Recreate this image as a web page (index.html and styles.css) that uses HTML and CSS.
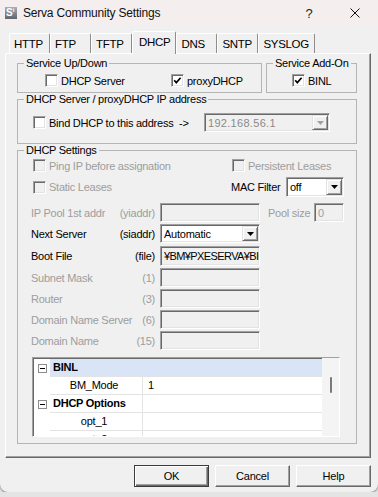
FILE: index.html
```html
<!DOCTYPE html>
<html lang="en">
<head>
    <meta charset="UTF-8">
    <title>Serva Community Settings</title>
    <link rel="stylesheet" href="styles.css">
</head>
<body>

<div class="window">
    <div class="titlebar">
        <span class="app-icon">S<small>i</small></span>
        <span class="title">Serva Community Settings</span>
        <span class="tb-btn">?</span>
        <span class="tb-btn">
            <svg width="10" height="10" viewBox="0 0 10 10"><path d="M0.5 0.5 L9.5 9.5 M9.5 0.5 L0.5 9.5" stroke="#111" stroke-width="1" fill="none"/></svg>
        </span>
    </div>

    <div class="tabs">
        <span class="tab">HTTP</span>
        <span class="tab">FTP</span>
        <span class="tab">TFTP</span>
        <span class="tab active">DHCP</span>
        <span class="tab">DNS</span>
        <span class="tab">SNTP</span>
        <span class="tab">SYSLOG</span>
    </div>

    <div class="panel">
        <div class="group-row">
            <fieldset class="group up-down">
                <legend>Service Up/Down</legend>
                <div class="group-body">
                    <label class="check"><span class="box"></span>DHCP Server</label>
                    <label class="check"><span class="box"><svg width="11" height="11" viewBox="0 0 11 11"><path d="M2.2 5.2 L4.3 7.6 L8.6 2.8" stroke="#000" stroke-width="1.7" fill="none"/></svg></span>proxyDHCP</label>
                </div>
            </fieldset>
            <fieldset class="group add-on">
                <legend>Service Add-On</legend>
                <div class="group-body">
                    <label class="check"><span class="box"><svg width="11" height="11" viewBox="0 0 11 11"><path d="M2.2 5.2 L4.3 7.6 L8.6 2.8" stroke="#000" stroke-width="1.7" fill="none"/></svg></span>BINL</label>
                </div>
            </fieldset>
        </div>

        <fieldset class="group bind">
            <legend>DHCP Server / proxyDHCP IP address</legend>
            <div class="group-body">
                <label class="check"><span class="box"></span>Bind DHCP to this address&nbsp;&nbsp;-&gt;</label>
                <div class="combo disabled bind-combo">
                    <span class="combo-text">192.168.56.1</span>
                    <span class="combo-btn"><svg width="7" height="4" viewBox="0 0 7 4"><path d="M0 0 H7 L3.5 4 Z" fill="#a0a0a0"/></svg></span>
                </div>
            </div>
        </fieldset>

        <fieldset class="group settings">
            <legend>DHCP Settings</legend>
            <div class="group-body">
                <div class="opt-row first">
                    <label class="check off"><span class="box"></span>Ping IP before assignation</label>
                    <label class="check off persist"><span class="box"></span>Persistent Leases</label>
                </div>
                <div class="opt-row second">
                    <label class="check off"><span class="box"></span>Static Leases</label>
                    <div class="mac">
                        <span>MAC Filter</span>
                        <div class="combo mac-combo">
                            <span class="combo-text">off</span>
                            <span class="combo-btn"><svg width="7" height="4" viewBox="0 0 7 4"><path d="M0 0 H7 L3.5 4 Z" fill="#000"/></svg></span>
                        </div>
                    </div>
                </div>

                <div class="field-row pool off">
                    <span class="field-label"><span>IP Pool 1st addr</span><span>(yiaddr)</span></span>
                    <span class="field disabled"></span>
                    <span class="pool-label">Pool size</span>
                    <span class="field disabled pool-size">0</span>
                </div>
                <div class="field-row next">
                    <span class="field-label"><span>Next Server</span><span>(siaddr)</span></span>
                    <div class="combo">
                        <span class="combo-text">Automatic</span>
                        <span class="combo-btn"><svg width="7" height="4" viewBox="0 0 7 4"><path d="M0 0 H7 L3.5 4 Z" fill="#000"/></svg></span>
                    </div>
                </div>
                <div class="field-row boot">
                    <span class="field-label"><span>Boot File</span><span>(file)</span></span>
                    <span class="field readonly">¥BM¥PXESERVA¥BIOS</span>
                </div>
                <div class="field-row off">
                    <span class="field-label"><span>Subnet Mask</span><span>(1)</span></span>
                    <span class="field disabled"></span>
                </div>
                <div class="field-row off">
                    <span class="field-label"><span>Router</span><span>(3)</span></span>
                    <span class="field disabled"></span>
                </div>
                <div class="field-row off">
                    <span class="field-label"><span>Domain Name Server</span><span>(6)</span></span>
                    <span class="field disabled"></span>
                </div>
                <div class="field-row off">
                    <span class="field-label"><span>Domain Name</span><span>(15)</span></span>
                    <span class="field disabled"></span>
                </div>

                <div class="propgrid">
                    <div class="pg-rows">
                        <div class="pg-row cat selected">
                            <span class="pg-gutter"><span class="minus"></span></span>
                            <span class="pg-catname">BINL</span>
                        </div>
                        <div class="pg-row">
                            <span class="pg-gutter"></span>
                            <span class="pg-name">BM_Mode</span>
                            <span class="pg-value">1</span>
                        </div>
                        <div class="pg-row cat">
                            <span class="pg-gutter"><span class="minus"></span></span>
                            <span class="pg-name bold">DHCP Options</span>
                            <span class="pg-value"></span>
                        </div>
                        <div class="pg-row">
                            <span class="pg-gutter"></span>
                            <span class="pg-name">opt_1</span>
                            <span class="pg-value"></span>
                        </div>
                        <div class="pg-row">
                            <span class="pg-gutter"></span>
                            <span class="pg-name">opt_2</span>
                            <span class="pg-value"></span>
                        </div>
                    </div>
                    <div class="pg-scroll"><span class="thumb"></span></div>
                </div>
            </div>
        </fieldset>
    </div>

    <div class="buttons">
        <button class="btn default">OK</button>
        <button class="btn">Cancel</button>
        <button class="btn">Help</button>
    </div>
</div>

</body>
</html>
```

FILE: styles.css
```css
* {
    box-sizing: border-box;
}

body {
    margin: 0;
    background-color: #e4e4e4;
    font-family: "Liberation Sans", Arial, sans-serif;
    font-size: 11px;
    letter-spacing: -0.25px;
    color: #000;
}

.window {
    width: 378px;
    height: 492px;
    background-color: #f0f0f0;
    border-radius: 0 0 8px 8px;
    box-shadow: 0 1px 2px rgba(0, 0, 0, 0.45);
    display: flex;
    flex-direction: column;
    overflow: hidden;
}

/* Title bar */
.titlebar {
    height: 26px;
    flex-shrink: 0;
    display: flex;
    align-items: center;
    padding-left: 5px;
    background-color: #f4eeee;
}
.app-icon {
    width: 12px;
    height: 12px;
    margin-right: 6px;
    background: linear-gradient(#a9aeb4, #5f656c);
    color: #fff;
    font-size: 10px;
    font-weight: bold;
    line-height: 12px;
    padding-left: 1px;
    letter-spacing: 0;
}
.app-icon small {
    font-size: 6px;
    vertical-align: top;
    line-height: 7px;
}
.title {
    flex: 1;
    font-size: 12px;
    letter-spacing: -0.2px;
    color: #111;
}
.tb-btn {
    width: 46px;
    height: 26px;
    display: flex;
    align-items: center;
    justify-content: center;
    font-size: 13px;
    color: #222;
}

/* Tabs */
.tabs {
    height: 27px;
    flex-shrink: 0;
    display: flex;
    align-items: flex-end;
    padding-left: 9px;
}
.tab {
    height: 20px;
    min-width: 41px;
    padding: 3px 5px 0 4px;
    border: 1px solid;
    border-bottom: none;
    border-color: #fff #8d8d8d transparent #fff;
    border-radius: 2px 2px 0 0;
    font-size: 11.5px;
    letter-spacing: -0.3px;
    line-height: 14px;
}
.tab.active {
    height: 23px;
    margin-bottom: -1px;
    padding-top: 3px;
    padding-left: 6px;
    position: relative;
    z-index: 1;
    background-color: #f0f0f0;
}

/* Tab page */
.panel {
    height: 405px;
    margin: 0 7px 0 5px;
    padding: 3px 13px 0 11px;
    border: 1px solid;
    border-color: #fff #696969 #696969 #fff;
    box-shadow: inset -1px -1px 0 #a0a0a0;
}

.group-row {
    display: flex;
    gap: 4px;
}

fieldset.group {
    margin: 0;
    padding: 0;
    min-width: 0;
    border: 1px solid #b5b5b5;
}
fieldset.group legend {
    margin-left: 6px;
    padding: 0 2px;
    line-height: 13px;
}
.up-down {
    width: 245px;
}
.add-on {
    flex: 1;
}
.up-down .group-body {
    display: grid;
    grid-template-columns: 126px auto;
    padding: 4px 0 5px 27px;
}
.add-on .group-body {
    padding: 4px 0 5px 25px;
}

.bind {
    margin-top: 2px;
}
.bind .group-body {
    display: flex;
    align-items: center;
    padding: 7px 26px 11px 15px;
}

.settings {
    margin-top: 3px;
}
.settings .group-body {
    padding: 2px 12px 6px 13px;
}

/* Checkboxes */
.check {
    display: flex;
    align-items: center;
    gap: 3px;
    height: 13px;
    white-space: nowrap;
}
.box {
    width: 13px;
    height: 13px;
    flex-shrink: 0;
    border: 1px solid;
    border-color: #a0a0a0 #fff #fff #a0a0a0;
    box-shadow: inset 1px 1px 0 #696969, inset -1px -1px 0 #e3e3e3;
    background-color: #fff;
}
.box svg {
    display: block;
}
.check.off {
    color: #9d9d9d;
}
.check.off .box {
    background-color: #f0f0f0;
}
.bind .check {
    height: 19px;
}

.opt-row {
    display: grid;
    grid-template-columns: 200px 1fr;
    align-items: center;
}
.opt-row .check {
    margin-left: 2px;
}
.opt-row.first {
    height: 13px;
}
.opt-row.second {
    height: 20px;
    margin-top: 5px;
}
.opt-row .persist {
    margin-left: 1px;
}
.mac {
    display: flex;
    align-items: center;
    white-space: nowrap;
}

/* Edit fields and combo boxes */
.field-row {
    display: flex;
    align-items: center;
    height: 19px;
    margin-top: 2px;
}
.field-row.pool {
    margin-top: 6px;
}
.field-row.boot {
    height: 20px;
    margin-top: 3px;
}
.field-row.off {
    color: #9d9d9d;
}
.field-label {
    width: 124px;
    margin-right: 5px;
    display: flex;
    justify-content: space-between;
    white-space: nowrap;
}
.field {
    width: 100px;
    height: 100%;
    padding: 0 3px;
    display: flex;
    align-items: center;
    overflow: hidden;
    white-space: nowrap;
    color: #000;
    border: 1px solid;
    border-color: #a0a0a0 #fff #fff #a0a0a0;
    box-shadow: inset 1px 1px 0 #696969, inset -1px -1px 0 #e3e3e3;
    background-color: #fff;
}
.field.disabled,
.field.readonly {
    background-color: #f0f0f0;
}
.field.readonly {
    letter-spacing: -0.6px;
}
.field.disabled {
    color: #9d9d9d;
}
.pool-label {
    margin-left: 8px;
}
.pool-size {
    width: 30px;
    margin-left: auto;
}

.combo {
    width: 100px;
    height: 19px;
    flex-shrink: 0;
    display: flex;
    align-items: stretch;
    padding: 2px;
    border: 1px solid;
    border-color: #a0a0a0 #fff #fff #a0a0a0;
    box-shadow: inset 1px 1px 0 #696969, inset -1px -1px 0 #e3e3e3;
    background-color: #fff;
}
.combo.bind-combo {
    width: 126px;
    margin-left: auto;
}
.combo.mac-combo {
    width: 58px;
    height: 20px;
    margin-left: auto;
}
.combo-text {
    flex: 1;
    padding-left: 1px;
    display: flex;
    align-items: center;
    white-space: nowrap;
    overflow: hidden;
}
.combo-btn {
    width: 16px;
    margin: -1px -1px -1px 0;
    display: flex;
    align-items: center;
    justify-content: center;
    background-color: #f0f0f0;
    border: 1px solid;
    border-color: #e3e3e3 #696969 #696969 #e3e3e3;
    box-shadow: inset 1px 1px 0 #fff, inset -1px -1px 0 #a0a0a0;
}
.combo.disabled {
    background-color: #f0f0f0;
    color: #8a8a8a;
}
.combo.disabled .combo-text {
    letter-spacing: 0.3px;
}

/* Property grid */
.propgrid {
    width: 308px;
    height: 80px;
    margin: 7px 0 0 1px;
    display: flex;
    overflow: hidden;
    background-color: #fff;
    border: 1px solid;
    border-color: #a0a0a0 #fff #fff #a0a0a0;
    box-shadow: inset 1px 1px 0 #696969;
}
.pg-rows {
    flex: 1;
    padding-top: 1px;
}
.pg-row {
    display: flex;
    height: 18px;
}
.pg-gutter {
    width: 17px;
    flex-shrink: 0;
    display: flex;
    align-items: center;
    justify-content: center;
    padding-left: 1px;
}
.minus {
    width: 9px;
    height: 9px;
    border: 1px solid #8c8c8c;
    display: flex;
    align-items: center;
    justify-content: center;
}
.minus::after {
    content: "";
    width: 5px;
    height: 1px;
    background-color: #000;
}
.pg-name {
    width: 93px;
    text-align: center;
    line-height: 17px;
    border-bottom: 1px solid #e3e3e3;
    border-right: 1px solid #e3e3e3;
    padding-right: 4px;
}
.pg-name.bold {
    text-align: left;
    padding-left: 3px;
    font-weight: bold;
}
.pg-value {
    flex: 1;
    line-height: 17px;
    padding-left: 5px;
    border-bottom: 1px solid #e3e3e3;
}
.pg-catname {
    flex: 1;
    font-weight: bold;
    line-height: 17px;
    padding-left: 3px;
}
.pg-row.selected .pg-catname {
    background-color: #d9e5f6;
    border-bottom: 1px solid #e3e3e3;
}
.pg-scroll {
    width: 17px;
    background-color: #f4f4f4;
    padding: 19px 0 0 8px;
}
.thumb {
    display: block;
    width: 2px;
    height: 16px;
    border-radius: 1px;
    background-color: #7a7a7a;
}

/* Dialog buttons */
.buttons {
    display: flex;
    justify-content: flex-end;
    gap: 6px;
    margin-top: 7px;
    padding-right: 7px;
}
.btn {
    width: 75px;
    height: 22px;
    padding: 0;
    font-family: "Liberation Sans", Arial, sans-serif;
    font-size: 11px;
    letter-spacing: -0.2px;
    color: #000;
    background-color: #f0f0f0;
    border: 1px solid;
    border-color: #fff #696969 #696969 #fff;
    box-shadow: inset -1px -1px 0 #a0a0a0;
}
.btn.default {
    border-color: #3c3c3c;
    box-shadow: inset 1px 1px 0 #fff, inset -1px -1px 0 #696969, inset -2px -2px 0 #a0a0a0;
}
```
